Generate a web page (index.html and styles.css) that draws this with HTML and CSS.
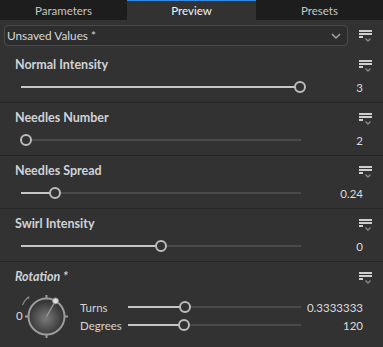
FILE: index.html
```html
<!DOCTYPE html>
<html>
<head>
<meta charset="utf-8">
<link rel="stylesheet" href="styles.css">
</head>
<body>
<div class="tabs">
  <div class="tab">Parameters</div>
  <div class="tab active">Preview</div>
  <div class="tab">Presets</div>
</div>

<div class="preset-row">
  <div class="select">
    <span>Unsaved Values *</span>
    <svg class="chev" width="10" height="6" viewBox="0 0 10 6"><polyline points="1,1 5,5 9,1" fill="none" stroke="#a8a8a8" stroke-width="1.4"/></svg>
  </div>
  <svg class="menu" width="14" height="12" viewBox="0 0 14 12"><rect x="0" y="0" width="13" height="2" fill="#cfcfcf"/><rect x="0" y="3" width="13" height="2" fill="#cfcfcf"/><rect x="0" y="6" width="4" height="2" fill="#cfcfcf"/><polyline points="6.5,8.5 9,11 11.5,8.5" fill="none" stroke="#8a8a8a" stroke-width="1.3"/></svg>
</div>

<div class="section">
  <div class="head"><span class="label">Normal Intensity</span>
    <svg class="menu" width="14" height="12" viewBox="0 0 14 12"><rect x="0" y="0" width="13" height="2" fill="#cfcfcf"/><rect x="0" y="3" width="13" height="2" fill="#cfcfcf"/><rect x="0" y="6" width="4" height="2" fill="#cfcfcf"/><polyline points="6.5,8.5 9,11 11.5,8.5" fill="none" stroke="#8a8a8a" stroke-width="1.3"/></svg></div>
  <div class="row">
    <div class="slider"><div class="fill" style="width:279px"></div><div class="knob" style="left:273px"></div></div>
    <span class="value">3</span>
  </div>
</div>

<div class="section">
  <div class="head"><span class="label">Needles Number</span>
    <svg class="menu" width="14" height="12" viewBox="0 0 14 12"><rect x="0" y="0" width="13" height="2" fill="#cfcfcf"/><rect x="0" y="3" width="13" height="2" fill="#cfcfcf"/><rect x="0" y="6" width="4" height="2" fill="#cfcfcf"/><polyline points="6.5,8.5 9,11 11.5,8.5" fill="none" stroke="#8a8a8a" stroke-width="1.3"/></svg></div>
  <div class="row">
    <div class="slider"><div class="fill" style="width:5px"></div><div class="knob" style="left:-1px"></div></div>
    <span class="value">2</span>
  </div>
</div>

<div class="section">
  <div class="head"><span class="label">Needles Spread</span>
    <svg class="menu" width="14" height="12" viewBox="0 0 14 12"><rect x="0" y="0" width="13" height="2" fill="#cfcfcf"/><rect x="0" y="3" width="13" height="2" fill="#cfcfcf"/><rect x="0" y="6" width="4" height="2" fill="#cfcfcf"/><polyline points="6.5,8.5 9,11 11.5,8.5" fill="none" stroke="#8a8a8a" stroke-width="1.3"/></svg></div>
  <div class="row">
    <div class="slider"><div class="fill" style="width:34px"></div><div class="knob" style="left:28px"></div></div>
    <span class="value">0.24</span>
  </div>
</div>

<div class="section">
  <div class="head"><span class="label">Swirl Intensity</span>
    <svg class="menu" width="14" height="12" viewBox="0 0 14 12"><rect x="0" y="0" width="13" height="2" fill="#cfcfcf"/><rect x="0" y="3" width="13" height="2" fill="#cfcfcf"/><rect x="0" y="6" width="4" height="2" fill="#cfcfcf"/><polyline points="6.5,8.5 9,11 11.5,8.5" fill="none" stroke="#8a8a8a" stroke-width="1.3"/></svg></div>
  <div class="row">
    <div class="slider"><div class="fill" style="width:140px"></div><div class="knob" style="left:134px"></div></div>
    <span class="value">0</span>
  </div>
</div>

<div class="section last">
  <div class="head"><span class="label italic">Rotation *</span>
    <svg class="menu" width="14" height="12" viewBox="0 0 14 12"><rect x="0" y="0" width="13" height="2" fill="#cfcfcf"/><rect x="0" y="3" width="13" height="2" fill="#cfcfcf"/><rect x="0" y="6" width="4" height="2" fill="#cfcfcf"/><polyline points="6.5,8.5 9,11 11.5,8.5" fill="none" stroke="#8a8a8a" stroke-width="1.3"/></svg></div>
  <div class="rot-body">
    <span class="zero">0</span>
    <svg class="dial" width="50" height="49" viewBox="0 0 50 49">
      <defs>
        <radialGradient id="g" cx="0.48" cy="0.55" r="0.55">
          <stop offset="0" stop-color="#7a7a7a"/>
          <stop offset="1" stop-color="#2c2c2c"/>
        </radialGradient>
      </defs>
      <path d="M1.5 13 Q3.5 8 7 5.5" fill="none" stroke="#8c8c8c" stroke-width="1.2"/>
      <polygon points="8.6,4.2 5.6,5.2 7.6,7.2" fill="#8c8c8c"/>
      <g stroke="#9c9c9c" stroke-width="2">
        <line x1="25.5" y1="3" x2="25.5" y2="6.5"/>
        <line x1="25.5" y1="42.5" x2="25.5" y2="46"/>
        <line x1="4" y1="24.5" x2="7.5" y2="24.5"/>
        <line x1="43.5" y1="24.5" x2="47" y2="24.5"/>
      </g>
      <circle cx="25.5" cy="24.5" r="18" fill="url(#g)" stroke="#9c9c9c" stroke-width="2"/>
      <line x1="25.5" y1="24.5" x2="34.5" y2="8.9" stroke="#9a9a9a" stroke-width="1.3"/>
      <circle cx="34.5" cy="8.9" r="3" fill="#e0e0e0" stroke="#8a8a8a" stroke-width="1"/>
    </svg>
    <div class="rot-rows">
      <div class="rrow">
        <span class="rlabel">Turns</span>
        <div class="slider short"><div class="fill" style="width:57px"></div><div class="knob" style="left:51px"></div></div>
        <span class="value">0.3333333</span>
      </div>
      <div class="rrow">
        <span class="rlabel">Degrees</span>
        <div class="slider short"><div class="fill" style="width:56px"></div><div class="knob" style="left:50px"></div></div>
        <span class="value">120</span>
      </div>
    </div>
  </div>
</div>
</body>
</html>
```

FILE: styles.css
```css
html, body {
  margin: 0;
  padding: 0;
}
body {
  width: 383px;
  height: 347px;
  overflow: hidden;
  background: #323232;
  font-family: Lato, "Noto Sans", sans-serif;
  color: #d6d6d6;
}
.tabs {
  display: flex;
  height: 20px;
  background: #1d1d1d;
}
.tab {
  width: 127px;
  text-align: center;
  font-size: 11.5px;
  line-height: 21px;
  color: #c4c4c4;
}
.tab.active {
  width: 129px;
  background: #323232;
  color: #f2f2f2;
  box-shadow: inset 0 1px 0 #2f8be6;
}
.preset-row {
  display: flex;
  align-items: flex-start;
  padding: 5px 0 4px 4px;
}
.select {
  width: 344px;
  height: 21px;
  box-sizing: border-box;
  border: 1px solid #4a4a4a;
  border-radius: 4px;
  background: #2d2d2d;
  display: flex;
  align-items: center;
  justify-content: space-between;
  padding: 0 6px 0 2px;
  font-size: 11.8px;
  color: #d8d8d8;
}
.preset-row .menu {
  margin: 5px 0 0 11px;
}
.section {
  border-bottom: 1px solid #262626;
  padding: 7px 0 0 15px;
  box-sizing: border-box;
  height: 53px;
}
.section.last {
  border-bottom: none;
  height: auto;
}
.head {
  display: flex;
  justify-content: space-between;
  align-items: flex-start;
  height: 16px;
}
.head .menu {
  margin: 3px 10px 0 0;
}
.label {
  font-weight: bold;
  font-size: 12.5px;
  line-height: 16px;
  color: #cfd3d8;
}
.label.italic {
  font-style: italic;
}
.row {
  display: flex;
  align-items: center;
  height: 14px;
  margin-top: 7px;
}
.slider {
  position: relative;
  width: 280px;
  height: 14px;
  margin-left: 6px;
  flex: none;
}
.slider::before {
  content: "";
  position: absolute;
  left: 0;
  right: 0;
  top: 6px;
  height: 2px;
  background: #494949;
}
.fill {
  position: absolute;
  left: 0;
  top: 6px;
  height: 2px;
  background: #c6c6c6;
}
.knob {
  position: absolute;
  top: 1px;
  width: 12px;
  height: 12px;
  box-sizing: border-box;
  border: 2px solid #bcbcbc;
  border-radius: 50%;
  background: #323232;
}
.value {
  flex: 1;
  text-align: right;
  padding-right: 20px;
  font-size: 11.5px;
  color: #dcdcdc;
}
.rot-body {
  display: flex;
  align-items: flex-start;
  margin: 5px 0 0 1px;
}
.zero {
  width: 5px;
  font-size: 11.5px;
  align-self: center;
  color: #dcdcdc;
}
.dial {
  display: block;
  margin-top: 2px;
  flex: none;
}
.rot-rows {
  flex: 1;
  margin: 8px 0 0 9px;
}
.rrow {
  display: flex;
  align-items: center;
  height: 18px;
}
.rlabel {
  width: 48px;
  font-size: 11.5px;
  color: #d4d4d4;
}
.slider.short {
  width: 173px;
  margin-left: 0;
}
```
